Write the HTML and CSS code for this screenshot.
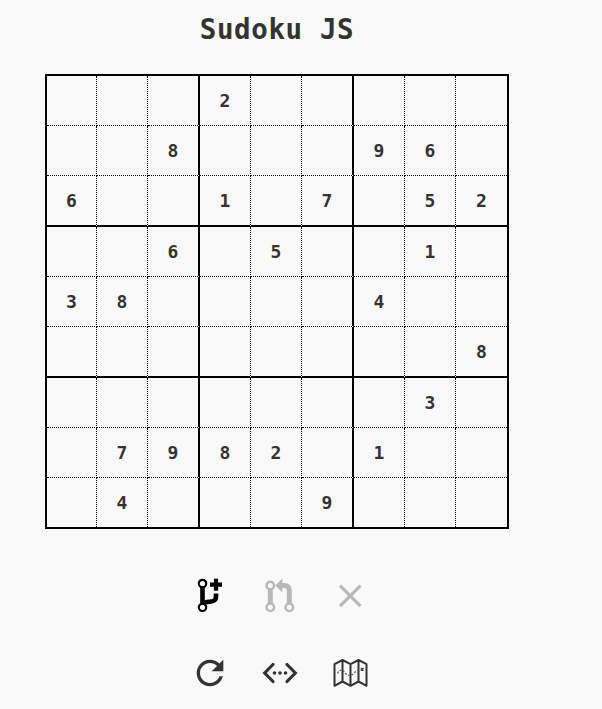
FILE: index.html
```
<!DOCTYPE html>
<html lang="en">
<head>
<meta charset="utf-8">
<title>Sudoku JS</title>
<link rel="stylesheet" href="styles.css">
</head>
<body>
<main class="game">
<h1 class="title">Sudoku JS</h1>
<div class="board" id="board"></div>
<div class="controls">
<button class="control active" aria-label="Create branch"><svg viewBox="0 0 40 40"><g fill="none" stroke="currentColor"><g stroke-width="2.200"><circle cx="12.500" cy="7.500" r="3.700"/><circle cx="12.500" cy="31.300" r="3.700"/></g><path stroke-width="4.600" d="M12.500 11v17M26 17.500v3c0 4-2.500 5-6.500 5.200c-3 .2-5.500.8-7 2.300"/><path stroke-width="4.200" d="M20 8.700h12M26 2.700v12"/></g></svg></button>
<button class="control muted" aria-label="Merge branch"><svg viewBox="0 0 40 40"><g fill="none" stroke="currentColor"><g stroke-width="2.500"><circle cx="10.300" cy="9.500" r="3.800"/><circle cx="10.300" cy="31.300" r="3.800"/><circle cx="29.300" cy="31.300" r="3.800"/></g><path stroke-width="5" d="M10.300 13.500v14M21 9.500h3c4 0 5.300 2 5.300 5v13"/></g><path fill="currentColor" d="M15.300 9.500l7-7v14z"/></svg></button>
<button class="control muted" aria-label="Discard"><svg viewBox="0 0 40 40"><path fill="none" stroke="currentColor" stroke-width="3.100" d="M10 9.700l20.500 20.500M30.500 9.700l-20.500 20.500"/></svg></button>
<button class="control" aria-label="Restart"><svg viewBox="0 0 24 24"><path fill="currentColor" d="M17.650 6.350C16.200 4.900 14.210 4 12 4c-4.420 0-7.990 3.580-7.990 8s3.570 8 7.990 8c3.730 0 6.840-2.550 7.730-6h-2.080c-.820 2.330-3.040 4-5.650 4-3.310 0-6-2.690-6-6s2.690-6 6-6c1.660 0 3.140.690 4.220 1.780L13 11h7V4l-2.350 2.350z"/></svg></button>
<button class="control" aria-label="Show code"><svg viewBox="0 0 40 40"><path fill="none" stroke="currentColor" stroke-width="3.200" stroke-linecap="round" d="M13 11.500L4.700 20l8.300 8.500M27 11.500l8.300 8.500-8.300 8.500"/><g fill="currentColor"><circle cx="14.500" cy="20" r="1.800"/><circle cx="20" cy="20" r="1.800"/><circle cx="25.500" cy="20" r="1.800"/></g></svg></button>
<button class="control" aria-label="Map"><svg viewBox="0 0 40 40"><path fill="none" stroke="currentColor" stroke-width="2" stroke-linejoin="round" d="M4.500 11.200l8-4.200 8 4.200 8-4.200 8 4.200v21.600l-8-4.300-8 4.300-8-4.300-8 4.300zM12.500 7v21.500M20.500 11.200v21.600M28.500 7v21.500"/><path class="route" d="M7.500 20.500q4-7 8 0q5 4 9-1l3-2 5.500-1"/><path stroke="currentColor" stroke-width="1.200" d="M31 15l2.500 2.500M33.500 15l-2.500 2.500"/></svg></button>
</div>
</main>
<script src="board.js"></script>
</body>
</html>
```
FILE: styles.css
```
body {
  margin: 0;
  background: #f9f9f9;
  color: #333;
  font-family: "DejaVu Sans Mono", monospace;
}

.game {
  width: 464px;
  padding: 8px 0 0 45px;
}

.title {
  height: 42px;
  margin: 0 0 24px;
  font-size: 27.5px;
  line-height: 42px;
  font-weight: 700;
  text-align: center;
  letter-spacing: .6px;
}

.board {
  display: grid;
  grid-template-columns: 50px 51px 52px 51px 51px 52px 51px 51px 51px;
  grid-template-rows: 50px 50px 51px 50px 50px 51px 50px 50px 49px;
  border: 2px solid #000;
}

.cell {
  display: flex;
  align-items: center;
  justify-content: center;
  border-right: 1px dotted #000;
  border-bottom: 1px dotted #000;
  font-size: 18px;
  font-weight: 700;
}

.cell:nth-child(3n) {
  border-right: 2px solid #000;
}

.cell:nth-child(n+19):nth-child(-n+27),
.cell:nth-child(n+46):nth-child(-n+54) {
  border-bottom: 2px solid #000;
}

.cell:nth-child(9n) {
  border-right: 0;
}

.cell:nth-child(n+73) {
  border-bottom: 0;
}

.controls {
  display: grid;
  grid-template-columns: repeat(3, 40px);
  gap: 37px 30px;
  padding: 47px 0 0 145px;
}

.control {
  width: 40px;
  height: 40px;
  padding: 0;
  border: 0;
  background: none;
  color: #333;
}

.control svg {
  display: block;
  width: 40px;
  height: 40px;
}

.active {
  color: #000;
}

.muted {
  color: #b8b8b8;
}

.route {
  fill: none;
  stroke: #555;
  stroke-width: 1.2;
  stroke-dasharray: 2 1.5;
}
```
FILE: board.js
```
const rows = [
  "...2.....",
  "..8...96.",
  "6..1.7.52",
  "..6.5..1.",
  "38....4..",
  "........8",
  ".......3.",
  ".7982.1..",
  ".4...9..."
];

const board = document.getElementById("board");
for (const value of rows.join("")) {
  const cell = document.createElement("div");
  cell.className = "cell";
  cell.textContent = value === "." ? "" : value;
  board.append(cell);
}
```
